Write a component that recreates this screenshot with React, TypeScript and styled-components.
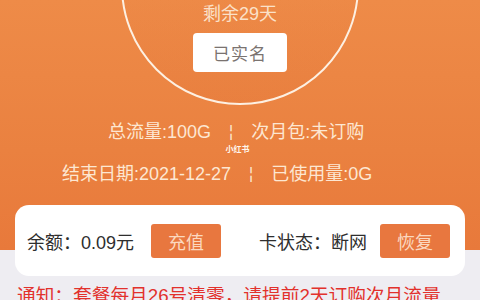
import React from "react";
import styled, { createGlobalStyle } from "styled-components";

const GlobalStyle = createGlobalStyle`
  html, body {
    margin: 0;
    padding: 0;
    background: #eeedf2;
  }
  body {
    font-family: "Liberation Sans", "Noto Sans CJK SC", sans-serif;
    overflow: hidden;
  }
`;

const Page = styled.main`
  width: 480px;
  height: 300px;
  overflow: hidden;
  display: flex;
  flex-direction: column;
  background: linear-gradient(
    180deg,
    #ee8b48 0px,
    #ea8140 150px,
    #e8793b 250px,
    #eeedf2 250px
  );

  & > * {
    flex-shrink: 0;
  }
`;

const Ring = styled.section`
  box-sizing: border-box;
  width: 238px;
  height: 238px;
  margin: -133px auto 0;
  border: 2.5px solid #fdf0e2;
  border-radius: 50%;
  background: linear-gradient(180deg, rgba(230, 120, 60, 0) 40%, rgba(215, 95, 40, 0.12) 100%);
  display: flex;
  flex-direction: column;
  align-items: center;
  justify-content: flex-end;
  padding-bottom: 31px;
  gap: 8px;
`;

const Remain = styled.div`
  font-size: 18px;
  line-height: 22px;
  color: #fbe1c9;
`;

const VerifiedBadge = styled.div`
  width: 94px;
  height: 39px;
  border-radius: 4px;
  background: #fff;
  color: #7a7370;
  font-size: 17px;
  display: flex;
  align-items: center;
  justify-content: center;
  letter-spacing: 1px;
`;

const Stats = styled.section`
  display: flex;
  flex-direction: column;
  margin-top: 16px;
  color: #fde7d2;
`;

const StatRow = styled.div<{ $indent: number }>`
  display: flex;
  align-items: center;
  padding-left: ${(p) => p.$indent}px;
  font-size: 18px;
  line-height: 22px;
  white-space: nowrap;
`;

const Sep = styled.span`
  margin: 0 18px;
  font-size: 16px;
`;

const Mark = styled.div`
  margin: 2px 0 8px;
  padding-right: 5px;
  text-align: center;
  font-size: 8px;
  line-height: 10px;
  font-weight: 700;
  color: #fff6ee;
`;

const Card = styled.section`
  margin: 20px 15px 0;
  height: 71px;
  border-radius: 14px;
  background: #fff;
  display: flex;
  align-items: center;
  padding: 0 15px 0 12px;
  color: #2e2e2e;
  font-size: 18px;
`;

const Group = styled.div<{ $gap: number }>`
  display: flex;
  align-items: center;
  gap: ${(p) => p.$gap}px;
`;

const Spacer = styled.div`
  flex: 1;
`;

const ActionButton = styled.button`
  width: 70px;
  height: 34px;
  border: none;
  border-radius: 3px;
  background: #e8773f;
  color: #fbd8bf;
  font-family: "Noto Sans CJK SC", sans-serif;
  font-size: 18px;
  padding: 0;
  cursor: pointer;
`;

const Notice = styled.p`
  margin: 7px 0 0 17px;
  font-size: 18.7px;
  line-height: 26px;
  color: #e2312c;
  white-space: nowrap;
`;

export default function App() {
  return (
    <>
      <GlobalStyle />
      <Page>
        <Ring>
          <Remain>剩余29天</Remain>
          <VerifiedBadge>已实名</VerifiedBadge>
        </Ring>

        <Stats>
          <StatRow $indent={108}>
            总流量:100G<Sep>¦</Sep>次月包:未订购
          </StatRow>
          <Mark>小红书</Mark>
          <StatRow $indent={62}>
            结束日期:2021-12-27<Sep>¦</Sep>已使用量:0G
          </StatRow>
        </Stats>

        <Card>
          <Group $gap={17}>
            <span>余额：0.09元</span>
            <ActionButton>充值</ActionButton>
          </Group>
          <Spacer />
          <Group $gap={13}>
            <span>卡状态：断网</span>
            <ActionButton>恢复</ActionButton>
          </Group>
        </Card>

        <Notice>通知：套餐每月26号清零，请提前2天订购次月流量</Notice>
      </Page>
    </>
  );
}
